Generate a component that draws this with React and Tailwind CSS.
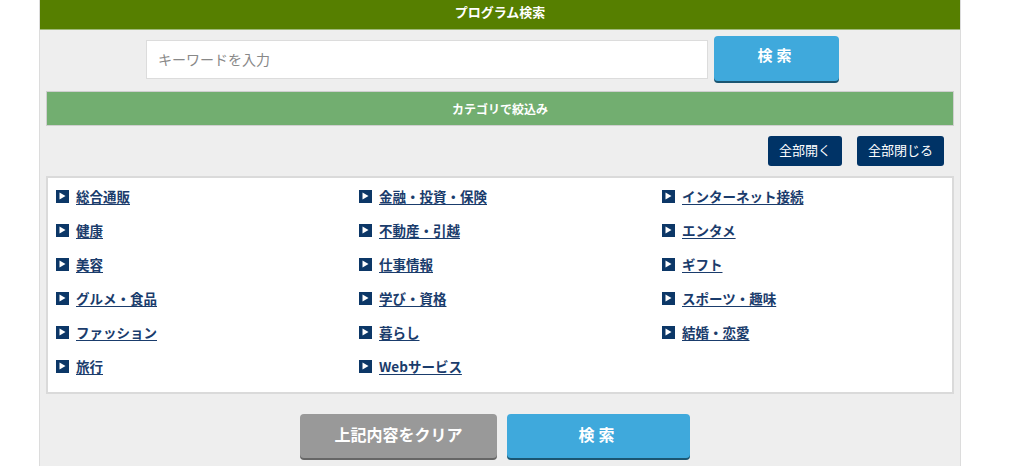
import React from 'react'

const categories = [
  '総合通販', '金融・投資・保険', 'インターネット接続',
  '健康', '不動産・引越', 'エンタメ',
  '美容', '仕事情報', 'ギフト',
  'グルメ・食品', '学び・資格', 'スポーツ・趣味',
  'ファッション', '暮らし', '結婚・恋愛',
  '旅行', 'Webサービス',
]

function Arrow() {
  return (
    <span className="flex h-[13px] w-[13px] shrink-0 items-center justify-center bg-[#0c3767]">
      <svg width="7" height="8" viewBox="0 0 7 8">
        <path d="M0.5 0.5 L6.5 4 L0.5 7.5 Z" fill="#fff" />
      </svg>
    </span>
  )
}

export default function App() {
  return (
    <div
      className="min-h-[466px] bg-white"
      style={{ fontFamily: '"Noto Sans CJK JP", "Noto Sans", sans-serif' }}
    >
      <div className="ml-[39px] w-[922px] h-[466px] border-x border-[#dcdcdc] bg-[#eeeeee]">
        {/* header */}
        <div className="flex h-[30px] items-center justify-center border-b border-[#9fb97a] bg-[#567f00] pb-[5px] text-[13px] font-bold text-white">
          プログラム検索
        </div>

        {/* search row */}
        <div className="flex items-start pl-[106px] pt-[6px]">
          <div className="mt-[4px] flex h-[39px] w-[562px] items-center border border-[#dcdcdc] bg-white px-[11px] text-[14px] text-[#888]">
            キーワードを入力
          </div>
          <button className="ml-[6px] h-[45px] w-[125px] rounded-[4px] bg-[#3fa9dc] pb-[6px] text-[15px] font-bold tracking-[4px] text-white shadow-[0_2px_0_#1b5672]">
            検索
          </button>
        </div>

        {/* category bar */}
        <div className="mx-[6px] mt-[10px] flex h-[35px] items-center justify-center border border-[#cfcfcf] bg-[#72ae70] text-[12px] font-bold text-white">
          カテゴリで絞込み
        </div>

        {/* open / close */}
        <div className="mt-[10px] flex justify-end gap-[15px] pr-[16px]">
          <button className="h-[30px] w-[74px] rounded-[3px] bg-[#003366] pb-[2px] text-[13px] text-white">
            全部開く
          </button>
          <button className="h-[30px] w-[87px] rounded-[3px] bg-[#003366] pb-[2px] text-[13px] text-white">
            全部閉じる
          </button>
        </div>

        {/* list */}
        <div className="mx-[6px] mt-[10px] h-[218px] border-2 border-[#dadada] bg-white pl-[8px] pt-[1px]">
          <div className="grid grid-cols-[303px_303px_1fr]">
            {categories.map((c) => (
              <div key={c} className="flex h-[34px] items-center gap-[7px]">
                <Arrow />
                <a className="text-[13.5px] font-bold text-[#1a3c6c] underline underline-offset-[2px] decoration-[#1a3c6c]">
                  {c}
                </a>
              </div>
            ))}
          </div>
        </div>

        {/* bottom buttons */}
        <div className="mt-[20px] flex justify-center gap-[10px] pr-[10px]">
          <button className="h-[44px] w-[197px] rounded-[4px] bg-[#999999] pb-[5px] text-[16px] font-bold text-white shadow-[0_2px_0_#666]">
            上記内容をクリア
          </button>
          <button className="h-[44px] w-[183px] rounded-[4px] bg-[#3fa9dc] pb-[5px] text-[16px] font-bold tracking-[4px] text-white shadow-[0_2px_0_#1b5672]">
            検索
          </button>
        </div>
      </div>
    </div>
  )
}
